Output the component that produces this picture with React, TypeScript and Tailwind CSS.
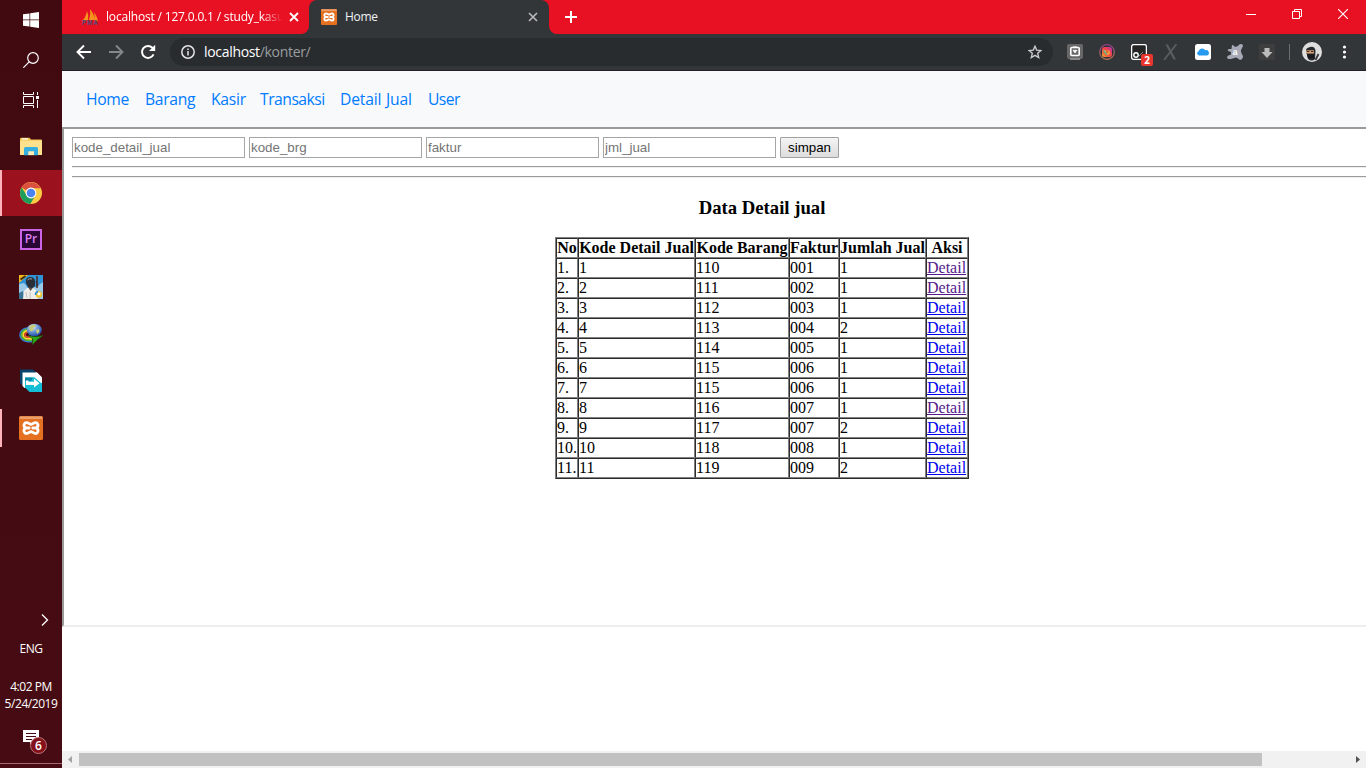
import React from 'react';

const ui = "font-['Open_Sans','Noto_Sans',sans-serif]";

type Row = [string, string, string, string, boolean];
const rows: Row[] = [
  ['1', '110', '001', '1', true],
  ['2', '111', '002', '1', true],
  ['3', '112', '003', '1', false],
  ['4', '113', '004', '2', false],
  ['5', '114', '005', '1', false],
  ['6', '115', '006', '1', false],
  ['7', '115', '006', '1', false],
  ['8', '116', '007', '1', true],
  ['9', '117', '007', '2', false],
  ['10', '118', '008', '1', false],
  ['11', '119', '009', '2', false],
];

const XamppIcon = ({ size }: { size: number }) => (
  <svg width={size} height={size} viewBox="0 0 24 24">
    <rect width="24" height="24" rx="1.5" fill="#e5701f" />
    <rect x="0.5" y="0.5" width="23" height="2.5" rx="1" fill="#e8a070" />
    <path
      d="M8.5 6.8C5.5 5.8 3.6 9.6 6.4 11.9C3.6 14.4 5.4 18.4 8.5 17.2L12 15.6 15.5 17.2C18.6 18.4 20.4 14.4 17.6 11.9C20.4 9.6 18.5 5.8 15.5 6.8L12 8.4ZM7.5 12H10.2M13.8 12H16.5"
      fill="none" stroke="#fff" strokeWidth="2.8" strokeLinecap="round" strokeLinejoin="round"
    />
  </svg>
);

const WindowsIcon = () => (
  <svg width="16" height="16" viewBox="0 0 16 16" fill="#fff">
    <path d="M0 2.3 6.5 1.4V7.6H0ZM7.2 1.2 16 0V7.6H7.2ZM0 8.3H6.5V14.6L0 13.7ZM7.2 8.3H16V16L7.2 14.7Z" />
  </svg>
);

const SearchIcon = () => (
  <svg width="16" height="16" viewBox="0 0 16 16" fill="none" stroke="#fff" strokeWidth="1.2">
    <circle cx="10" cy="6" r="5.3" />
    <path d="M6.2 9.8 .3 15.7" />
  </svg>
);

const TaskViewIcon = () => (
  <svg width="16" height="16" viewBox="0 0 16 16" fill="none" stroke="#fff">
    <path d="M.5 0V2.5H10.5V0M.5 4.5H10.5V11.5H.5ZM.5 16V13.5H10.5V16M14.5 0V3M14.5 8V16" />
    <path d="M13 4H16V7H13Z" fill="#fff" stroke="none" />
  </svg>
);

const FolderIcon = () => (
  <svg width="22" height="19" viewBox="0 0 22 19">
    <path d="M0 2Q0 .7 1.2 .7H9.5L11 2.5H21Q22 2.5 22 3.5V17.5H0Z" fill="#f2c14b" />
    <path d="M1.8 1.3H8V2.6H1.8Z" fill="#fff" />
    <path d="M0 3.5H22V17.5Q22 18 21 18H1Q0 18 0 17.5Z" fill="#fde18d" />
    <path d="M4 11.5Q4 10 5.5 10H16.5Q18 10 18 11.5V18.3H14V14.5H8.5V18.3H4Z" fill="#34aee0" />
    <path d="M8.5 14.5H14V18.2H8.5Z" fill="#fdebb8" />
  </svg>
);

const ChromeIcon = () => (
  <svg width="24" height="24" viewBox="0 0 24 24">
    <circle cx="12" cy="12" r="11" fill="#fbcb43" />
    <path d="M12 12 2.5 6.5A11 11 0 0 1 21.5 6.7L21.7 7.2H12Z" fill="#d9503f" />
    <path d="M2.5 6.5A11 11 0 0 0 11.4 23L16.2 14.4 12 12 7.7 14.2Z" fill="#1f9d5b" />
    <circle cx="12" cy="12" r="5.4" fill="#fff" />
    <circle cx="12" cy="12" r="4.3" fill="#4a83ee" />
  </svg>
);

const PubgIcon = () => (
  <svg width="24" height="24" viewBox="0 0 24 24">
    <rect width="24" height="24" fill="#2f93d8" />
    <path d="M0 9 5 8 9 13 17 12 24 7V24H0Z" fill="#9cc9e6" />
    <path d="M0 18 4 16 5 24H0Z" fill="#3b7394" />
    <path d="M0 0H9L0 8Z" fill="#f5b41e" />
    <path d="m1.5 4.5 5-3.5" stroke="#3a280c" strokeWidth="1.6" />
    <path d="M4 24 5 16 8 13h6l3 2 2 9Z" fill="#f0eeea" />
    <path d="m9 12 2.5 4 3-4Z" fill="#5a4c44" />
    <path d="M7 8Q6 2 11 2Q16 2 16 7V11L13 13 9 12Z" fill="#293038" />
    <path d="M8.5 5Q10 3 13 4" stroke="#9aa4ad" fill="none" />
    <path d="M18 1V13" stroke="#4a2d2a" strokeWidth="1.6" />
    <path d="M17 6 19 11" stroke="#4a2d2a" strokeWidth="1.2" />
    <path d="M11 17V24M7 17 8 23" stroke="#b5b3ae" strokeWidth=".8" />
    <circle cx="19.8" cy="19.5" r="3.2" fill="#f5c52b" />
    <path d="M16.5 20A3 3 0 0 1 19 16.8" stroke="#248ce1" strokeWidth="1.5" fill="none" />
    <circle cx="20" cy="18.8" r="1.6" fill="#fff" />
  </svg>
);

const IdmIcon = () => (
  <svg width="24" height="24" viewBox="0 0 24 24">
    <defs>
      <radialGradient id="globe" cx=".38" cy=".28" r=".75">
        <stop offset="0" stopColor="#eef3f0" />
        <stop offset=".4" stopColor="#7fa6dc" />
        <stop offset="1" stopColor="#1746a8" />
      </radialGradient>
    </defs>
    <path d="M10 6C4 5.5 .8 9.5 1 13C1.4 18 6.500 20.500 13 19.600" fill="none" stroke="#3a78da" strokeWidth="1.5" />
    <path d="M10 7.200C5 7 2.200 10 2.400 13C2.800 17 7 19 13 18.200" fill="none" stroke="#4bbb35" strokeWidth="1.7" />
    <path d="M10 8.600C6.500 8.300 4 10.500 4.100 13C4.500 16 8 17.300 13 16.800" fill="none" stroke="#f6df32" strokeWidth="1.8" />
    <path d="M10 10C7.500 10 5.800 11.500 5.900 13C6.300 15 9 15.500 13 15.200" fill="none" stroke="#e0512b" strokeWidth="1.7" />
    <ellipse cx="15.300" cy="8" rx="7.500" ry="6.300" fill="url(#globe)" />
    <path d="M10.500 4Q14 1.500 16.500 3Q17 5 14.500 5.500Q15 8.500 12 9.500Q9.500 7.500 10.500 4ZM17 8 20 7 20.500 10 18 12Z" fill="#c4cb7a" />
    <path d="M9 13.500Q17 16 24 13.500L18.500 17.500 13.500 22.500 13.800 17Z" fill="#2ea91d" stroke="#12680d" strokeWidth=".5" />
  </svg>
);

const ShareIcon = () => (
  <svg width="24" height="24" viewBox="0 0 24 24">
    <path d="M1 .5H14L17.500 3.500 4.500 17.500 1 14Z" fill="#07436a" />
    <path d="M3.500 3.500H18L23 8.500V17L17 19H5.500L3.500 17Z" fill="#fff" />
    <path d="M6 8.500H23V23H10.500L6 18.500Z" fill="#12bdd5" />
    <path d="M6 8.500H14L12 12H6Z" fill="#0b86a6" />
    <path d="M17 3.500H18L23 8.500V14H21L14 8V6Z" fill="#fff" />
    <path d="M14.500 7.500 22 14 14.500 20Z" fill="#12bdd5" />
    <path d="M7 11.500H9.500V12.800H15V9.800L20.500 14.200 15 18.600V16H7Z" fill="#fff" />
  </svg>
);

const ActionCenter = () => (
  <div className="relative h-[26px] w-[26px]">
    <svg width="17" height="17" viewBox="0 0 17 17" className="block">
      <path d="M0 0H16V12H10L7 15V12H0Z" fill="#fff" />
      <path d="M3 3.5H13M3 6.5H13M3 9.5H9" stroke="#470c13" />
    </svg>
    <div className="absolute left-[7px] top-[7px] flex h-[17px] w-[17px] items-center justify-center rounded-full border border-[#b8757b] bg-[#851019] text-[12px] font-semibold leading-none text-white">6</div>
  </div>
);

const taskApps: { key: string; icon: React.ReactNode; cls: string }[] = [
  { key: 'folder', icon: <FolderIcon />, cls: 'h-[47px]' },
  { key: 'chrome', icon: <ChromeIcon />, cls: 'h-[46px] bg-[#9b111e] before:absolute before:left-0 before:top-0 before:h-full before:w-[2px] before:bg-[#ffb3ba]' },
  {
    key: 'pr',
    icon: <div className="mb-px flex h-[21px] w-[22px] items-center justify-center border-2 border-[#c964e6] bg-[#2a0637] font-['Open_Sans',sans-serif] text-[12px] font-semibold leading-none text-[#dc80f3]">Pr</div>,
    cls: 'h-[47px]',
  },
  { key: 'pubg', icon: <PubgIcon />, cls: 'h-[47px]' },
  { key: 'idm', icon: <IdmIcon />, cls: 'h-[47px]' },
  { key: 'share', icon: <ShareIcon />, cls: 'h-[47px]' },
  { key: 'xampp', icon: <XamppIcon size={24} />, cls: 'h-[47px] before:absolute before:left-0 before:top-[5px] before:h-[38px] before:w-[2px] before:bg-[#ffb3ba]' },
];

function Taskbar() {
  return (
    <aside className={`flex h-full w-[62px] shrink-0 flex-col items-center bg-gradient-to-b from-[#400a10] via-[#440b12] to-[#470c13] text-white ${ui}`}>
      <div className="flex h-10 items-center"><WindowsIcon /></div>
      <div className="flex h-10 items-center"><SearchIcon /></div>
      <div className="flex h-[43px] items-start pt-3"><TaskViewIcon /></div>
      {taskApps.map((a) => (
        <div key={a.key} className={`relative flex w-full items-center justify-center ${a.cls}`}>{a.icon}</div>
      ))}
      <svg className="ml-[28px] mt-[163px] shrink-0" width="8" height="12" viewBox="0 0 8 12" fill="none" stroke="#fff" strokeWidth="1.3">
        <path d="M1 .5 6.5 6 1 11.5" />
      </svg>
      <div className="mt-[14px] text-[12px] leading-[17px] tracking-[-0.5px]">ENG</div>
      <div className="mt-[21px] whitespace-nowrap text-center text-[12px] leading-[17px] tracking-[-0.45px]">4:02 PM<br />5/24/2019</div>
      <div className="ml-[10px] mt-[18px]"><ActionCenter /></div>
      <div className="mt-[7px] h-px w-full bg-[#a16c70]" />
    </aside>
  );
}

function TabStrip() {
  return (
    <div className="flex h-[34px] bg-[#e81123]">
      <div className="flex w-[247px] items-center pl-[19px]">
        <svg width="18" height="18" viewBox="0 0 18 18" className="shrink-0">
          <path d="M1 13Q5 9 6 3Q8 7 7 12ZM8 12Q10 6 9 1Q14 7 13 12ZM13 12Q14 7 13 4Q16 8 17 13Z" fill="#f7941d" />
          <text x="1" y="17.2" fontSize="6.5" fontWeight="bold" fontFamily="Liberation Sans" fill="#514a78" textLength="16">PMA</text>
        </svg>
        <div className="ml-[7px] w-[177px] whitespace-nowrap pb-px text-[12px] tracking-[-0.18px] text-white [mask-image:linear-gradient(to_right,black_155px,transparent_177px)]">localhost / 127.0.0.1 / study_kasu</div>
        <svg className="ml-[6px] shrink-0" width="10" height="10" viewBox="0 0 10 10" stroke="#fff" strokeWidth="1.8"><path d="m1 1 8 8M9 1 1 9" /></svg>
      </div>
      <div className="relative flex w-[240px] items-center rounded-t-lg bg-[#323639] pl-3">
        <svg className="absolute -left-2 bottom-0" width="8" height="8"><path d="M8 0V8H0A8 8 0 0 0 8 0Z" fill="#323639" /></svg>
        <svg className="absolute -right-2 bottom-0" width="8" height="8"><path d="M0 0V8H8A8 8 0 0 1 0 0Z" fill="#323639" /></svg>
        <XamppIcon size={16} />
        <div className="ml-2 pb-px text-[12px] tracking-[-0.3px] text-[#f1f3f4]">Home</div>
        <svg className="ml-auto mr-[11px]" width="10" height="10" viewBox="0 0 10 10" stroke="#b9bbbd" strokeWidth="1.6"><path d="m1 1 8 8M9 1 1 9" /></svg>
      </div>
      <svg className="ml-4 mt-[11px]" width="12" height="12" viewBox="0 0 12 12" stroke="#fff" strokeWidth="2"><path d="M6 0V12M0 6H12" /></svg>
      <div className="ml-auto flex h-[28px] items-center gap-[36px] pr-[18px]">
        <svg width="10" height="10" stroke="#fff"><path d="M0 5.5H10" /></svg>
        <svg width="10" height="10" fill="none" stroke="#fff"><path d="M.5 2.5H7.5V9.5H.5ZM2.5 2.5V.5H9.5V7.5H7.5" /></svg>
        <svg width="10" height="10" stroke="#fff" strokeWidth="1.1"><path d="m0 0 10 10M10 0 0 10" /></svg>
      </div>
    </div>
  );
}

function Toolbar() {
  return (
    <div className="flex h-[37px] items-center border-b border-[#222025] bg-[#323639] pl-[14px]">
      <svg width="16" height="16" viewBox="0 0 16 16" fill="none" stroke="#fff" strokeWidth="1.9"><path d="M15 8H2M8 1.5 1.5 8 8 14.5" /></svg>
      <svg className="ml-4" width="16" height="16" viewBox="0 0 16 16" fill="none" stroke="#85888a" strokeWidth="1.9"><path d="M1 8H14M8 1.5 14.5 8 8 14.5" /></svg>
      <svg className="ml-4" width="16" height="16" viewBox="0 0 16 16" fill="none"><path d="M13.5 10.3A6 6 0 1 1 12.4 3.8L14 5.4" stroke="#fff" strokeWidth="2" /><path d="M15.2 .8V7H9Z" fill="#fff" /></svg>
      <div className="ml-[14px] flex h-7 w-[883px] items-center rounded-full bg-[#282c2f] pl-[11px] pr-[11px]">
        <svg width="14" height="14" viewBox="0 0 14 14" fill="none" stroke="#e3e4e5" strokeWidth="1.5"><circle cx="7" cy="7" r="6.2" /><path d="M7 6V10.5M7 3.5V5" /></svg>
        <div className="ml-[9px] text-[14px] leading-none tracking-[-0.32px] text-white">localhost<span className="text-[#9a9d9f]">/konter/</span></div>
        <svg className="ml-auto" width="14" height="14" viewBox="0 0 14 14" fill="none" stroke="#c8cacb" strokeWidth="1.4"><path d="m7 1.2 1.7 3.9 4.2.4-3.2 2.8 1 4.2L7 10.3l-3.7 2.2 1-4.2L1.1 5.5l4.2-.4Z" /></svg>
      </div>
      <div className="ml-[14px] flex items-center gap-4">
        <svg width="16" height="16"><rect width="16" height="15" rx="2" fill="#686868" /><path d="M3 15H13" stroke="#888" strokeWidth="2" /><rect x="3.8" y="3.5" width="8.4" height="8" rx="1" fill="#686868" stroke="#fff" strokeWidth="1.6" /><path d="M6 2.7H10M6 6.3H10L8 9Z" fill="#fff" stroke="#fff" strokeWidth=".7" /></svg>
        <svg width="16" height="16">
          <defs>
            <linearGradient id="ring" x2="0" y2="1"><stop stopColor="#8e4288" /><stop offset="1" stopColor="#bb7951" /></linearGradient>
            <linearGradient id="insta" x1="1" y1="0" x2="0" y2="1"><stop stopColor="#b235bd" /><stop offset=".4" stopColor="#ef3e4c" /><stop offset=".75" stopColor="#f4683a" /><stop offset="1" stopColor="#f8cf38" /></linearGradient>
          </defs>
          <circle cx="8" cy="8" r="7.3" fill="#303035" stroke="url(#ring)" strokeWidth="1.2" /><rect x="3" y="3" width="10" height="10" rx="2.5" fill="url(#insta)" /><path d="M5 6.500H10.500L11 9.500 8.500 11Z" fill="#f7b43d" /><path d="M4.700 6.500 8 10.500" stroke="#58c08a" strokeWidth="1.6" fill="none" /><circle cx="8.300" cy="8" r="1.400" fill="#e8603c" />
        </svg>
        <div className="relative h-4 w-4">
          <svg width="16" height="16" className="block"><rect x=".6" y=".6" width="14.8" height="14.8" rx="2" fill="#242424" stroke="#fff" strokeWidth="1.3" /><circle cx="5" cy="11" r="2.2" fill="none" stroke="#fff" strokeWidth="1.4" /><path d="M8 12 12 8" stroke="#888" /></svg>
          <div className="absolute left-[10px] top-[10px] flex h-3 w-3 items-center justify-center rounded-[2px] bg-[#e8352e] text-[10px] font-bold leading-none text-white">2</div>
        </div>
        <svg width="16" height="16" fill="none"><path d="M2.5 .5H5L13 15.500H10.500Z" fill="#5a5d5f" /><path d="M13.5 0 1 16" stroke="#5a5d5f" strokeWidth="1.8" /></svg>
        <svg width="16" height="16"><rect width="16" height="16" rx="2.5" fill="#fff" /><path d="M4 11.500A2.200 2.200 0 0 1 3.500 7.300 3.700 3.700 0 0 1 10.300 6.300A2.700 2.700 0 0 1 12 11.500Z" fill="#269af0" /></svg>
        <svg width="16" height="16"><path d="M5 1Q7 1 8 3L11 2Q12 0 14 0Q16 0 16 2L14 6Q13.500 8 16 12Q16 15.500 13 16Q11 14 9 13.500L4 15Q0 15.500 0 13Q1 11 4 10.500L4 8 1 7Q0 5.500 2 5L4.500 5Z" fill="#a8a9b6" /><text x="5.500" y="11" fontSize="9" fontWeight="bold" fontFamily="Liberation Sans" fill="#fff">a</text></svg>
        <svg width="16" height="16"><rect width="16" height="16" rx="1.5" fill="#3e3e3e" /><path d="M5.5 4H10.5V8H13.5L8 14 2.5 8H5.5Z" fill="#bcbcbc" /></svg>
      </div>
      <div className="ml-[14px] h-4 w-px bg-[#6c6f72]" />
      <svg className="ml-3" width="20" height="20" viewBox="0 0 20 20"><circle cx="10" cy="10" r="10" fill="#dedede" /><path d="M4 9Q3.500 6 8 5Q13 4 13.500 9L13 17Q10 20 6 17Z" fill="#25282d" /><path d="M4.2 8.300H12V11.500H4.2Z" fill="#d8a276" /><path d="M5 12.500H12V16H6Z" fill="#17191d" /><path d="M5 9.5H7.300M9 9.5H11.500" stroke="#3c2c25" strokeWidth="1.200" /><path d="m13.500 18 3-6" stroke="#353840" strokeWidth="1.8" /></svg>
      <svg className="ml-[20px]" width="5" height="14" fill="#fff"><circle cx="2.5" cy="2" r="1.6" /><circle cx="2.5" cy="7" r="1.6" /><circle cx="2.5" cy="12" r="1.6" /></svg>
    </div>
  );
}

const links = [
  { label: 'Home', cls: 'w-[43px] tracking-[-0.35px]' },
  { label: 'Barang', cls: 'w-[50px] tracking-[-0.3px]' },
  { label: 'Kasir', cls: 'w-[33px] tracking-[-0.25px]' },
  { label: 'Transaksi', cls: 'w-[64px] tracking-[-0.5px]' },
  { label: 'Detail Jual', cls: 'w-[72px] tracking-[-0.2px] [word-spacing:1px]' },
  { label: 'User', cls: 'w-[33px] tracking-[-0.6px]' },
];

const cell = 'border border-[gray] [border-style:inset] p-0';

function DataTable() {
  return (
    <table className="mx-auto mt-[19px] w-[414px] table-fixed border-separate border-spacing-0 border border-[gray] text-[16px] leading-[18px] [border-style:outset]">
      <colgroup>
        <col className="w-[22px]" /><col className="w-[117px]" /><col className="w-[94px]" /><col className="w-[50px]" /><col className="w-[87px]" /><col className="w-[42px]" />
      </colgroup>
      <thead>
        <tr>
          {['No', 'Kode Detail Jual', 'Kode Barang', 'Faktur', 'Jumlah Jual', 'Aksi'].map((h) => (
            <th key={h} className={`${cell} whitespace-nowrap text-center font-bold`}>{h}</th>
          ))}
        </tr>
      </thead>
      <tbody>
        {rows.map(([id, brg, faktur, jml, visited]) => (
          <tr key={id}>
            <td className={cell}>{id}.</td>
            <td className={cell}>{id}</td>
            <td className={cell}>{brg}</td>
            <td className={cell}>{faktur}</td>
            <td className={cell}>{jml}</td>
            <td className={cell}><a className={`underline ${visited ? 'text-[#551a8b]' : 'text-[#0000ee]'}`}>Detail</a></td>
          </tr>
        ))}
      </tbody>
    </table>
  );
}

export default function App() {
  return (
    <div className="flex h-[768px] w-[1366px] overflow-hidden bg-white">
      <Taskbar />
      <div className={`flex min-w-0 flex-1 flex-col ${ui}`}>
        <TabStrip />
        <Toolbar />
        <nav className="flex h-14 shrink-0 items-center gap-4 bg-[#f8f9fa] pl-6 pt-px text-[15.7px] text-[#007bff]">
          {links.map((l) => (
            <a key={l.label} className={`whitespace-nowrap ${l.cls}`}>{l.label}</a>
          ))}
        </nav>
        <div className="min-h-0 flex-1 overflow-hidden">
          <section className="h-[500px] w-[1400px] border-2 border-b-[#eeeeee] border-l-[#9a9a9a] border-r-[#eeeeee] border-t-[#9a9a9a] p-2 font-['Liberation_Serif',serif] text-black">
            <form className="flex h-[21px] gap-1 font-['Liberation_Sans',sans-serif] text-[13.333px]">
              {['kode_detail_jual', 'kode_brg', 'faktur', 'jml_jual'].map((p) => (
                <input key={p} placeholder={p} className="h-[21px] w-[173px] border border-[#a6a6a6] bg-white px-px placeholder:text-[#757575]" />
              ))}
              <button type="button" className="h-[21px] w-[59px] rounded-[1px] border border-[#a0a0a0] bg-gradient-to-b from-[#f4f4f4] to-[#dddddd] leading-[18px]">simpan</button>
            </form>
            <div className="mt-2 h-[2px] border-b border-t border-b-[#eeeeee] border-t-[#9a9a9a]" />
            <div className="mt-2 h-[2px] border-b border-t border-b-[#eeeeee] border-t-[#9a9a9a]" />
            <h3 className="mt-[19px] text-center text-[18.72px] font-bold leading-[21px]">Data Detail jual</h3>
            <DataTable />
          </section>
        </div>
        <div className="flex h-[17px] shrink-0 items-center bg-[#f1f1f1]">
          <svg width="17" height="17"><path d="M10 5V12L6 8.5Z" fill="#a3a3a3" /></svg>
          <div className="h-[13px] w-[1183px] bg-[#c1c1c1]" />
          <svg className="ml-auto" width="17" height="17"><path d="M7 5V12L11 8.5Z" fill="#505050" /></svg>
        </div>
      </div>
    </div>
  );
}
